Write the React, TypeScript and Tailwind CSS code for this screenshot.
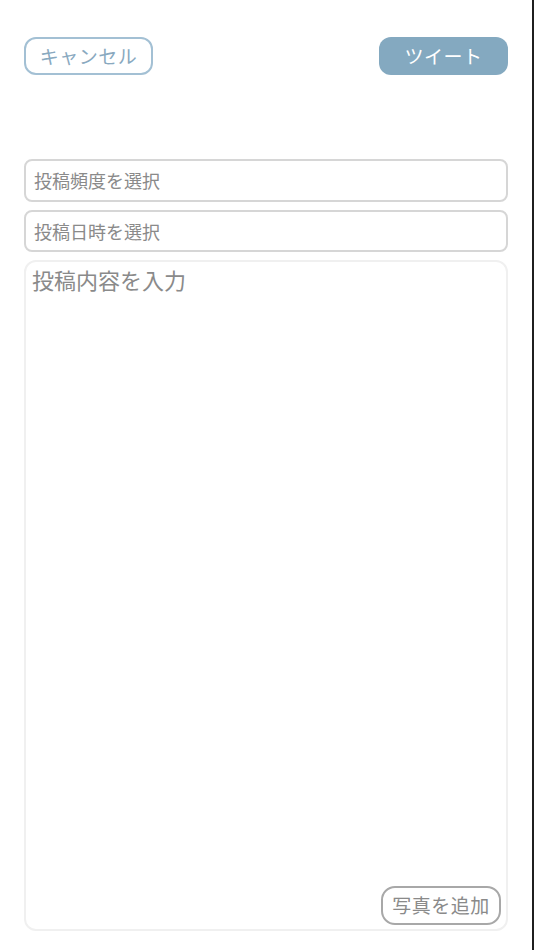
import { useState } from "react";

const font = { fontFamily: '"Noto Sans CJK JP", "Noto Sans", sans-serif' };

export default function App() {
  const [text, setText] = useState("");

  return (
    <div className="flex h-[950px] w-[534px] bg-white" style={font}>
      <div className="flex flex-1 flex-col border-r-2 border-[#1f1f1f] px-6 pt-[37px] pb-[19px]">
        <div className="flex items-center justify-between">
          <button className="h-[38px] w-[129px] rounded-[12px] border-2 border-[#a3c0d4] text-[19px] tracking-wide text-[#89a9bf]">
            キャンセル
          </button>
          <button className="h-[38px] w-[129px] rounded-[12px] bg-[#84a9c0] text-[19px] tracking-wide text-white">
            ツイート
          </button>
        </div>

        <div className="mt-[84px] flex flex-1 flex-col gap-2">
          <div className="flex h-[43px] items-center rounded-lg border-2 border-[#d6d6d6] px-2 text-[18px] text-[#8a8a8a]">
            投稿頻度を選択
          </div>
          <div className="flex h-[42px] items-center rounded-lg border-2 border-[#d6d6d6] px-2 text-[18px] text-[#8a8a8a]">
            投稿日時を選択
          </div>
          <div className="relative flex-1 rounded-[12px] border-2 border-[#f0f0f0]">
            <textarea
              value={text}
              onChange={(e) => setText(e.target.value)}
              placeholder="投稿内容を入力"
              className="h-full w-full resize-none bg-transparent px-[6px] pt-[1px] text-[22px] text-[#333] placeholder:text-[#8a8a8a] focus:outline-none"
            />
            <button className="absolute right-[5px] bottom-[4px] h-[39px] w-[120px] rounded-[14px] border-2 border-[#a8a8a8] bg-white text-[19px] tracking-wide text-[#8a8a8a]">
              写真を追加
            </button>
          </div>
        </div>
      </div>
    </div>
  );
}
